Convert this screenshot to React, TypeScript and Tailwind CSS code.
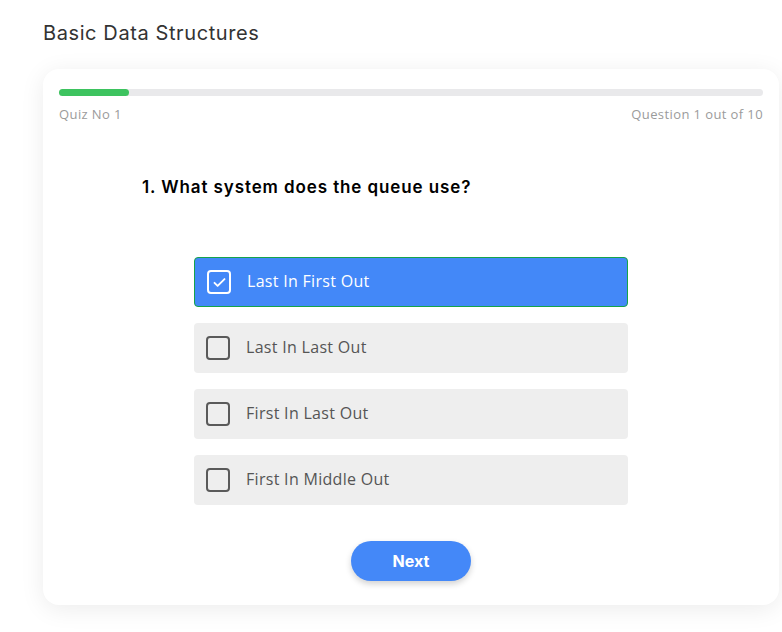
import React from "react";

const options = [
  "Last In First Out",
  "Last In Last Out",
  "First In Last Out",
  "First In Middle Out",
];

const Checkbox: React.FC<{ checked: boolean }> = ({ checked }) =>
  checked ? (
    <div className="w-6 h-6 rounded-[4px] border-[2.5px] border-white flex items-center justify-center">
      <svg viewBox="0 0 24 24" className="w-[15px] h-[15px]" fill="none">
        <path
          d="M4 12.5l5 5L20 6.5"
          stroke="white"
          strokeWidth="3"
          strokeLinecap="round"
          strokeLinejoin="round"
        />
      </svg>
    </div>
  ) : (
    <div className="w-6 h-6 rounded-[4px] border-[2.5px] border-[#5a5a5a]" />
  );

const App: React.FC = () => {
  const selected = 0;
  return (
    <div className="w-[782px] h-[632px] bg-white font-['Open_Sans',sans-serif] overflow-hidden">
      <div className="pl-[43px] pr-[3px] pt-[20px]">
        <h1 className="text-[20px] leading-[26px] text-[#333] font-['Inter',sans-serif] tracking-[0.6px]">
          Basic Data Structures
        </h1>

        <div className="mt-[23px] bg-white rounded-[16px] shadow-[0_4px_24px_rgba(0,0,0,0.08)] px-4 pt-[20px] pb-[24px]">
          {/* progress */}
          <div className="w-full h-[7px] rounded-full bg-[#e9e9eb]">
            <div className="h-full w-[10%] rounded-full bg-[#3dc35f]" />
          </div>
          <div className="flex justify-between mt-[9px] text-[13px] leading-[18px] text-[#9b9b9b] font-['Open_Sans',sans-serif] tracking-[0.4px]">
            <span>Quiz No 1</span>
            <span>Question 1 out of 10</span>
          </div>

          <h2 className="mt-[53px] pl-[83px] text-[17px] leading-[22px] font-semibold text-black font-['Inter',sans-serif] tracking-[0.9px]">
            1. What system does the queue use?
          </h2>

          <div className="mt-[59px] flex flex-col items-center gap-4">
            {options.map((opt, i) => (
              <div
                key={opt}
                className={
                  i === selected
                    ? "w-[434px] h-[50px] flex items-center gap-4 px-3 rounded-[4px] bg-[#4388f8] border border-[#16a34a] text-white"
                    : "w-[434px] h-[50px] flex items-center gap-4 px-3 rounded-[4px] bg-[#eeeeee] text-[#555]"
                }
              >
                <Checkbox checked={i === selected} />
                <span className="text-[16px] leading-[20px] tracking-[0.3px] font-['Open_Sans',sans-serif] -mt-[3px]">
                  {opt}
                </span>
              </div>
            ))}
          </div>

          <div className="mt-9 flex justify-center">
            <button className="w-[120px] h-[40px] rounded-full bg-[#4488f8] text-white text-[16px] font-bold font-['Inter',sans-serif] shadow-[0_3px_6px_rgba(0,0,0,0.18)]">
              Next
            </button>
          </div>
        </div>
      </div>
    </div>
  );
};

export default App;
